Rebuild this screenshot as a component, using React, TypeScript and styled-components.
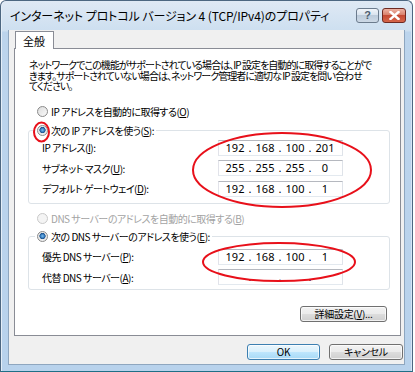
import React from 'react'
import styled, { createGlobalStyle } from 'styled-components'

const GlobalStyle = createGlobalStyle`
  html, body {
    margin: 0;
    padding: 0;
    background: #ffffff;
  }
  * {
    box-sizing: border-box;
  }
`

const ipRows = [
  { label: 'IP アドレス', key: 'I', value: ['192', '168', '100', '201'] },
  { label: 'サブネット マスク', key: 'U', value: ['255', '255', '255', '0'] },
  { label: 'デフォルト ゲートウェイ', key: 'D', value: ['192', '168', '100', '1'] },
]

const dnsRows = [
  { label: '優先 DNS サーバー', key: 'P', value: ['192', '168', '100', '1'] },
  { label: '代替 DNS サーバー', key: 'A', value: ['', '', '', ''] },
]

const IpField = ({ value }: { value: string[] }) => (
  <Field>
    {value.map((part, i) => (
      <React.Fragment key={i}>
        {i > 0 && <Dot>.</Dot>}
        <Octet>{part}</Octet>
      </React.Fragment>
    ))}
  </Field>
)

const App = () => {
  return (
    <Screen>
      <GlobalStyle />
      <Window>
        <TitleBar>
          <Title>インターネット プロトコル バージョン 4 (TCP/IPv4)のプロパティ</Title>
          <CaptionButtons>
            <HelpButton>?</HelpButton>
            <CloseButton>
              <svg width="11" height="9" viewBox="0 0 11 9">
                <path d="M1.5 1 L9.5 8 M9.5 1 L1.5 8" stroke="#ffffff" strokeWidth="2.4" strokeLinecap="square" />
              </svg>
            </CloseButton>
          </CaptionButtons>
        </TitleBar>

        <Body>
          <TabStrip>
            <Tab>全般</Tab>
          </TabStrip>
          <Panel>
            <Description>
              <Line>ネットワークでこの機能がサポートされている場合は、IP 設定を自動的に取得することがで</Line>
              <Line>きます。サポートされていない場合は、ネットワーク管理者に適切な IP 設定を問い合わせ</Line>
              <Line>てください。</Line>
            </Description>

            <RadioRow $top={15}>
              <Radio />
              <span>IP アドレスを自動的に取得する(<u>O</u>)</span>
            </RadioRow>

            <Group $top={7} $padTop={3} $padBottom={6}>
              <Legend>
                <Radio $checked />
                <span>次の IP アドレスを使う(<u>S</u>):</span>
              </Legend>
              <Rows>
                {ipRows.map((r) => (
                  <React.Fragment key={r.key}>
                    <Label>{r.label}(<u>{r.key}</u>):</Label>
                    <IpField value={r.value} />
                  </React.Fragment>
                ))}
              </Rows>
            </Group>

            <RadioRow $top={9} $disabled>
              <Radio $disabled />
              <span>DNS サーバーのアドレスを自動的に取得する(<u>B</u>)</span>
            </RadioRow>

            <Group $top={6} $padTop={6} $padBottom={4}>
              <Legend>
                <Radio $checked />
                <span>次の DNS サーバーのアドレスを使う(<u>E</u>):</span>
              </Legend>
              <Rows>
                {dnsRows.map((r) => (
                  <React.Fragment key={r.key}>
                    <Label>{r.label}(<u>{r.key}</u>):</Label>
                    <IpField value={r.value} />
                  </React.Fragment>
                ))}
              </Rows>
            </Group>

            <AdvancedRow>
              <PushButton $width={87}>詳細設定(<u>V</u>)...</PushButton>
            </AdvancedRow>
          </Panel>

          <ButtonRow>
            <PushButton $width={73} $default>OK</PushButton>
            <PushButton $width={74}>キャンセル</PushButton>
          </ButtonRow>
        </Body>
      </Window>

      <Marks width="415" height="372" viewBox="0 0 415 372">
        <ellipse cx="41.5" cy="132" rx="7.5" ry="9.5" />
        <ellipse cx="282" cy="170" rx="89" ry="37" />
        <ellipse cx="279" cy="262" rx="76" ry="19" />
      </Marks>
    </Screen>
  )
}

export default App

const Screen = styled.div`
  position: relative;
  width: 415px;
  height: 372px;
  font-family: "Noto Sans CJK JP", "Noto Sans", sans-serif;
  font-feature-settings: "palt";
  font-size: 10px;
  letter-spacing: -0.5px;
  color: #000;
`

const Marks = styled.svg`
  position: absolute;
  top: 0;
  left: 0;
  pointer-events: none;
  ellipse {
    fill: none;
    stroke: #e8101a;
    stroke-width: 2;
  }
`

const Window = styled.div`
  width: 413px;
  height: 372px;
  display: flex;
  flex-direction: column;
  border: 1px solid #4d6781;
  border-bottom-color: #1f6f86;
  border-radius: 6px 6px 0 0;
  background: linear-gradient(180deg, #dfe9f4 0px, #cddff0 30px, #bcd4ec 31px, #b8d2ec 100%);
  box-shadow: inset 1px 0 0 #e4eef8, inset -1px 0 0 #d6e5f4;
`

const TitleBar = styled.div`
  height: 29px;
  flex: none;
  display: flex;
  align-items: center;
  justify-content: space-between;
  padding: 0 6px 1px 9px;
`

const Title = styled.div`
  font-size: 12px;
  letter-spacing: -0.1px;
  white-space: nowrap;
`

const CaptionButtons = styled.div`
  display: flex;
  gap: 3px;
  align-self: flex-start;
  margin-top: 7px;
`

const HelpButton = styled.div`
  width: 23px;
  height: 15px;
  border: 1px solid #6b7b8d;
  border-radius: 3px;
  background: linear-gradient(180deg, #f1f5fa 0%, #d9e3ee 45%, #bccbdb 50%, #cdd9e6 100%);
  color: #4e5e70;
  font-family: "Liberation Sans", sans-serif;
  font-weight: bold;
  font-size: 11px;
  letter-spacing: 0;
  line-height: 13px;
  text-align: center;
`

const CloseButton = styled.div`
  width: 24px;
  height: 15px;
  border: 1px solid #6e2a22;
  border-radius: 3px;
  background: linear-gradient(180deg, #eeb3a4 0%, #d8806c 45%, #c54a34 50%, #d6664a 100%);
  display: flex;
  align-items: center;
  justify-content: center;
`

const Body = styled.div`
  flex: 1;
  margin: 0 7px 6px 7px;
  border: 1px solid #8ea6bf;
  border-top: none;
  background: #f0f0f0;
  display: flex;
  flex-direction: column;
  padding: 1px 0 0 0;
`

const TabStrip = styled.div`
  display: flex;
  padding-left: 6px;
  position: relative;
  z-index: 1;
`

const Tab = styled.div`
  width: 39px;
  height: 18px;
  background: #ffffff;
  border: 1px solid #898c95;
  border-bottom: none;
  margin-bottom: -1px;
  padding: 3px 0 0 7px;
  font-size: 11px;
  letter-spacing: 0;
  line-height: 12px;
`

const Panel = styled.div`
  height: 288px;
  margin: 0 3px 0 5px;
  background: #ffffff;
  border: 1px solid #898c95;
  display: flex;
  flex-direction: column;
  align-items: flex-start;
`

const Description = styled.div`
  margin: 10px 0 0 14px;
  display: flex;
  flex-direction: column;
  letter-spacing: -0.95px;
  white-space: nowrap;
`

const Line = styled.div`
  height: 10.5px;
  line-height: 11px;
`

const RadioRow = styled.div<{ $top: number; $disabled?: boolean }>`
  display: flex;
  align-items: center;
  gap: 3px;
  height: 12px;
  margin: ${(p) => p.$top}px 0 0 22px;
  color: ${(p) => (p.$disabled ? '#a3a3a3' : '#000')};
  white-space: nowrap;
`

const Radio = styled.span<{ $checked?: boolean; $disabled?: boolean }>`
  flex: none;
  width: 11px;
  height: 11px;
  border-radius: 50%;
  border: 1px solid ${(p) => (p.$disabled ? '#c9c9c9' : '#8a8a8a')};
  background: ${(p) =>
    p.$checked
      ? 'radial-gradient(circle at 50% 45%, #7cc0f0 0px, #2c6fb4 2.2px, #1b4f86 2.8px, #e8e8e8 3.4px, #f6f6f6 100%)'
      : p.$disabled
      ? '#f4f4f4'
      : 'linear-gradient(135deg, #dcdcdc, #fafafa)'};
`

const Group = styled.fieldset<{ $top: number; $padTop: number; $padBottom: number }>`
  width: 362px;
  margin: ${(p) => p.$top}px 0 0 13px;
  padding: ${(p) => p.$padTop}px 0 ${(p) => p.$padBottom}px 6px;
  border: 1px solid #dde3e8;
  border-radius: 3px;
  min-width: 0;
`

const Legend = styled.legend`
  display: flex;
  align-items: center;
  gap: 3px;
  height: 12px;
  padding: 0 2px;
  white-space: nowrap;
`

const Rows = styled.div`
  display: grid;
  grid-template-columns: 183px 125px;
  row-gap: 4.5px;
  align-items: center;
`

const Label = styled.div`
  padding-left: 7px;
  white-space: nowrap;
`

const Field = styled.div`
  width: 125px;
  height: 16px;
  display: flex;
  align-items: center;
  padding-left: 4px;
  background: #ffffff;
  border: 1px solid;
  border-color: #b5b8bf #dfe3e9 #e3e9ef #e2e3ea;
  font-family: "Noto Sans", "Liberation Sans", sans-serif;
  font-size: 11px;
  letter-spacing: 0;
  line-height: 12px;
`

const Octet = styled.span`
  width: 24px;
  text-align: center;
`

const Dot = styled.span`
  width: 6px;
  text-align: center;
`

const AdvancedRow = styled.div`
  align-self: stretch;
  display: flex;
  justify-content: flex-end;
  margin: 16px 13px 0 0;
`

const PushButton = styled.button<{ $width: number; $default?: boolean }>`
  width: ${(p) => p.$width}px;
  height: 16px;
  padding: 0;
  font-family: inherit;
  font-feature-settings: "palt";
  font-size: 10px;
  letter-spacing: -0.3px;
  line-height: 12px;
  color: #000;
  border-radius: 3px;
  border: 1px solid ${(p) => (p.$default ? '#3c7fb1' : '#707070')};
  background: ${(p) =>
    p.$default
      ? 'linear-gradient(180deg, #eaf6fd 0%, #d9f0fc 50%, #bee6fd 50%, #a7d9f5 100%)'
      : 'linear-gradient(180deg, #f2f2f2 0%, #ebebeb 50%, #dddddd 50%, #cfcfcf 100%)'};
  box-shadow: inset 0 0 0 1px rgba(255, 255, 255, 0.7);
`

const ButtonRow = styled.div`
  display: flex;
  justify-content: flex-end;
  gap: 9px;
  margin-top: 8px;
  padding-right: 1px;
`
